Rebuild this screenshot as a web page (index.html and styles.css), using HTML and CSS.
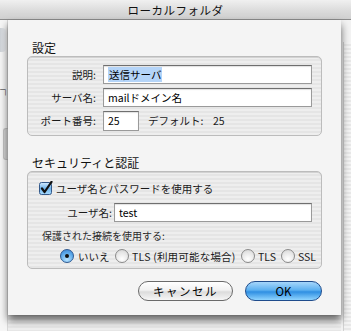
FILE: index.html
```html
<!DOCTYPE html>
<html lang="ja">
<head>
<meta charset="utf-8">
<title>ローカルフォルダ</title>
<link rel="stylesheet" href="styles.css">
</head>
<body>
<div class="window">
  <div class="titlebar">ローカルフォルダ</div>
  <div class="backdrop">
    <div class="bg-left">
      <div class="bg-icon"></div>
      <div class="bg-mark">┐</div>
      <div class="bg-tab"></div>
    </div>
    <div class="sheet">
      <div class="section-title">設定</div>
      <div class="group group-settings">
        <div class="row">
          <label class="lbl">説明:</label>
          <div class="field"><span class="sel">送信サーバ</span></div>
        </div>
        <div class="row">
          <label class="lbl">サーバ名:</label>
          <div class="field">mailドメイン名</div>
        </div>
        <div class="row">
          <label class="lbl">ポート番号:</label>
          <div class="field field-port">25</div>
          <span class="default-lbl">デフォルト:</span>
          <span class="default-val">25</span>
        </div>
      </div>

      <div class="section-title section-title-2">セキュリティと認証</div>
      <div class="group group-security">
        <div class="check-row">
          <svg class="checkbox" width="14" height="14" viewBox="0 0 14 14">
            <defs>
              <linearGradient id="cbg" x1="0" y1="0" x2="0" y2="1">
                <stop offset="0" stop-color="#d6ecff"/>
                <stop offset="0.5" stop-color="#6fb4ec"/>
                <stop offset="1" stop-color="#a9dcff"/>
              </linearGradient>
            </defs>
            <rect x="0.5" y="1.5" width="12" height="12" rx="2" fill="url(#cbg)" stroke="#33598a"/>
            <path d="M3 7.5 L5.6 11 L12.5 0.8" fill="none" stroke="#111" stroke-width="2.2" stroke-linecap="round" stroke-linejoin="round"/>
          </svg>
          <span>ユーザ名とパスワードを使用する</span>
        </div>
        <div class="row row-user">
          <label class="lbl lbl-user">ユーザ名:</label>
          <div class="field">test</div>
        </div>
        <div class="secure-lbl">保護された接続を使用する:</div>
        <div class="radio-row">
          <span class="radio on"><span class="dot"></span></span><span class="rtxt rtxt-1">いいえ</span>
          <span class="radio"></span><span class="rtxt rtxt-2">TLS (利用可能な場合)</span>
          <span class="radio"></span><span class="rtxt rtxt-3">TLS</span>
          <span class="radio"></span><span class="rtxt">SSL</span>
        </div>
      </div>

      <div class="buttons">
        <button class="btn btn-cancel">キャンセル</button>
        <button class="btn btn-ok">OK</button>
      </div>
    </div>
    <div class="bg-right">
      <div class="bg-scroll"></div>
    </div>
  </div>
</div>
</body>
</html>
```

FILE: styles.css
```css
* { box-sizing: border-box; }

html, body {
  margin: 0;
  padding: 0;
}

body {
  width: 351px;
  height: 331px;
  overflow: hidden;
  background: #ececec;
  font-family: "Noto Sans CJK JP", "DejaVu Sans", sans-serif;
  font-size: 10.5px;
  color: #1a1a1a;
}

.window {
  width: 351px;
  height: 331px;
  display: flex;
  flex-direction: column;
  background: repeating-linear-gradient(#efefef 0 2px, #e7e7e7 2px 4px);
}

.titlebar {
  height: 20px;
  flex: none;
  text-align: center;
  font-size: 11.5px;
  line-height: 20px;
  color: #111;
  background: linear-gradient(#f0f0f0, #dadada 60%, #d0d0d0);
  border-bottom: 1px solid #8c8c8c;
  letter-spacing: 0.5px;
}

.backdrop {
  display: flex;
  align-items: flex-start;
  flex: 1;
}

.bg-left {
  width: 8px;
  flex: none;
  height: 100%;
  position: relative;
  background: #f6f6f6;
  border-right: 1px solid #d8d8d8;
}

.bg-icon {
  position: absolute;
  left: 0;
  top: 8px;
  width: 6px;
  height: 24px;
  border-radius: 0 4px 4px 0;
  background: linear-gradient(90deg, #cfd3d8, #eef0f3);
}

.bg-mark {
  position: absolute;
  left: 0;
  top: 63px;
  font-size: 11px;
  line-height: 12px;
  color: #222;
}

.bg-tab {
  position: absolute;
  left: 3px;
  top: 108px;
  width: 5px;
  height: 32px;
  border-radius: 3px 0 0 3px;
  background: #d6d6d6;
  border: 1px solid #c4c4c4;
  border-right: none;
}

.bg-right {
  flex: 1;
  height: 100%;
  position: relative;
  background: #f3f3f3;
}

.bg-scroll {
  position: absolute;
  left: 2px;
  top: 22px;
  width: 8px;
  height: 300px;
  border-left: 1px solid #d2d2d2;
  background: repeating-linear-gradient(#f4f4f4 0 2px, #e8e8e8 2px 4px);
}

.sheet {
  width: 333px;
  height: 295px;
  flex: none;
  background: #f4f4f4;
  padding: 20px 19px 0 19px;
  box-shadow: 0 5px 8px rgba(0, 0, 0, 0.6);
  display: flex;
  flex-direction: column;
  position: relative;
  z-index: 1;
}

.section-title {
  font-size: 12px;
  line-height: 16px;
  height: 16px;
  padding-left: 5px;
  color: #111;
}

.section-title-2 {
  margin-top: 19px;
}

.group {
  border: 1px solid #bcbcbc;
  border-radius: 5px;
  background: repeating-linear-gradient(#eeeeee 0 2px, #e5e5e5 2px 4px);
  box-shadow: inset 0 1px 0 #d2d2d2;
}

.group-settings {
  height: 80px;
  padding: 8px 9px 0 0;
  display: flex;
  flex-direction: column;
  gap: 4px;
}

.row {
  display: flex;
  align-items: center;
  height: 19px;
}

.lbl {
  width: 68px;
  flex: none;
  text-align: right;
  margin-right: 7px;
  white-space: nowrap;
}

.lbl-user {
  width: 84px;
  margin-right: 2px;
}

.field {
  flex: 1;
  height: 19px;
  background: #fff;
  border: 1px solid #9a9a9a;
  border-top-color: #6f6f6f;
  box-shadow: inset 0 1px 1px rgba(0,0,0,0.12);
  line-height: 17px;
  padding-left: 4px;
  white-space: nowrap;
  overflow: hidden;
  color: #000;
}

.sel {
  background: #b4d4f8;
  padding: 0 1px;
  display: inline-block;
  line-height: 15px;
  margin-top: 1px;
}

.field-port {
  flex: none;
  width: 36px;
  height: 20px;
}

.default-lbl {
  margin-left: 9px;
  width: 65px;
  flex: none;
}

.default-val {
  flex: none;
}

.group-security {
  height: 98px;
  padding: 9px 9px 0 0;
  display: flex;
  flex-direction: column;
}

.check-row {
  display: flex;
  align-items: center;
  height: 14px;
  padding-left: 11px;
  gap: 3px;
}

.checkbox {
  flex: none;
}

.row-user {
  margin-top: 8px;
}

.secure-lbl {
  margin-top: 8px;
  padding-left: 14px;
  font-size: 10px;
  line-height: 12px;
  color: #2a2a2a;
}

.radio-row {
  margin-top: 6px;
  display: flex;
  align-items: center;
  padding-left: 32px;
  height: 16px;
  white-space: nowrap;
}

.radio {
  width: 14px;
  height: 14px;
  flex: none;
  border-radius: 50%;
  border: 1px solid #8a8a8a;
  background: radial-gradient(circle at 50% 75%, #ffffff, #e6e6e6 60%, #cfcfcf);
  margin-left: 4px;
  display: flex;
  align-items: center;
  justify-content: center;
}

.radio.on {
  margin-left: 0;
  border-color: #2e5a92;
  background: radial-gradient(circle at 50% 80%, #b7e3ff, #5aa8ea 60%, #3a7fd0);
}

.dot {
  width: 4px;
  height: 4px;
  border-radius: 50%;
  background: #111;
}

.rtxt {
  margin-left: 3px;
  font-size: 10.5px;
  flex: none;
}

.rtxt-1 { width: 33px; margin-left: 4px; }
.rtxt-2 { width: 105px; letter-spacing: 0.2px; }
.rtxt-3 { width: 19px; }

.buttons {
  display: flex;
  justify-content: flex-end;
  gap: 12px;
  margin-top: 12px;
  padding-right: 0;
}

.btn {
  height: 20px;
  border-radius: 10px;
  font-family: "Noto Sans CJK JP", "DejaVu Sans", sans-serif;
  font-size: 11.5px;
  line-height: 16px;
  padding: 0;
  color: #000;
}

.btn-cancel {
  width: 95px;
  border: 1px solid #6a6a6a;
  background: linear-gradient(#ffffff, #f2f2f2 45%, #dcdcdc 55%, #f6f6f6);
  letter-spacing: 1.5px;
}

.btn-ok {
  width: 77px;
  border: 1px solid #1f4c8c;
  background: linear-gradient(#a6d6fb, #5cb0f0 45%, #2f8fe2 55%, #8fd4ff);
  font-weight: normal;
}
```
